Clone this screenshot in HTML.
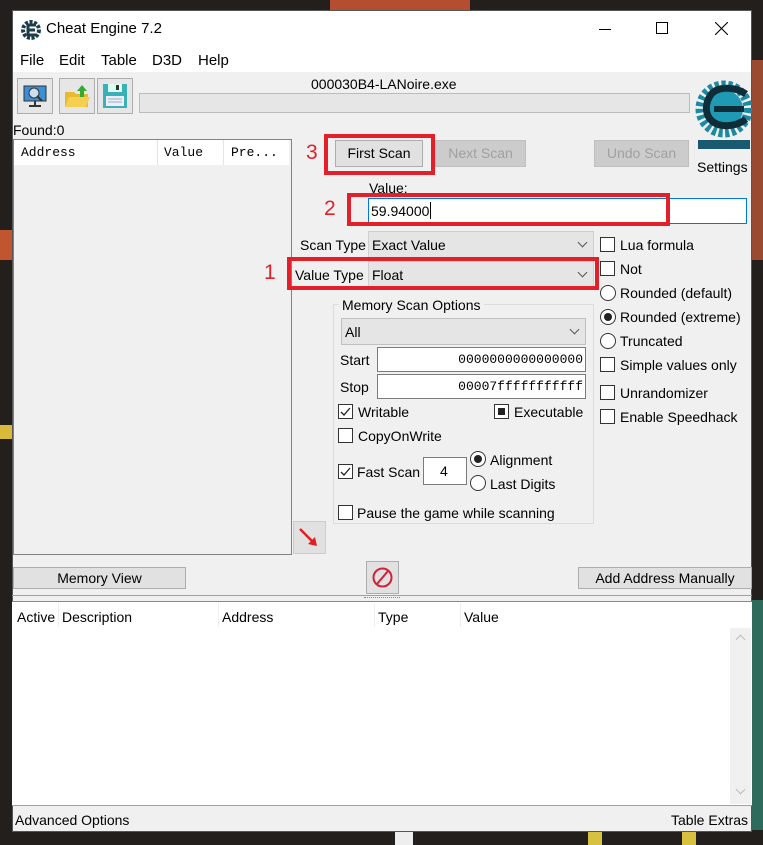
<!DOCTYPE html>
<html><head><meta charset="utf-8">
<style>
*{box-sizing:border-box;margin:0;padding:0}
body{width:763px;height:845px;overflow:hidden;background:#231f1c;font-family:"Liberation Sans",Arial,sans-serif;font-size:14px;color:#000;position:relative}
.a{position:absolute;white-space:nowrap}
.win{position:absolute;left:12px;top:10px;width:740px;height:822px;background:#f0f0f0}
.btn{position:absolute;background:#e1e1e1;border:1px solid #adadad;text-align:center}
.sel{position:absolute;background:#e5e5e5;border:1px solid #d0d0d0}
.inp{position:absolute;background:#fff;border:1px solid #7a7a7a}
.red{position:absolute;border:4px solid #e3202a}
.rn{position:absolute;color:#e3202a;font-size:21px}
.cb{position:absolute;width:15px;height:15px;border:1px solid #333;background:#fff}
.rd{position:absolute;width:16px;height:16px;border:1px solid #333;border-radius:50%;background:#fff}
.chev{position:absolute;width:7px;height:7px;border-right:1.3px solid #555;border-bottom:1.3px solid #555;transform:rotate(45deg)}
</style></head><body>
<div class="a" style="left:0;top:230px;width:12px;height:30px;background:#c0552f"></div>
<div class="a" style="left:0;top:425px;width:12px;height:14px;background:#d8b93a"></div>
<div class="a" style="left:752px;top:600px;width:11px;height:230px;background:#2f6b5c"></div>
<div class="a" style="left:330px;top:0;width:140px;height:10px;background:#b34e30"></div>
<div class="a" style="left:752px;top:60px;width:11px;height:200px;background:#9a4a30"></div>
<div class="a" style="left:395px;top:832px;width:18px;height:13px;background:#eee"></div>
<div class="a" style="left:588px;top:832px;width:14px;height:13px;background:#d8c040"></div>
<div class="a" style="left:682px;top:832px;width:14px;height:13px;background:#d8c040"></div>

<div class="win" style="border:1px solid #555"></div>
<div class="a" style="left:13px;top:11px;width:738px;height:61px;background:#fff"></div>
<svg class="a" style="left:21px;top:20px" width="20" height="20" viewBox="0 0 20 20"><circle cx="10" cy="10" r="8" fill="none" stroke="#1c3d4a" stroke-width="4" stroke-dasharray="3 1.5"/><path d="M15 5H7v10h8M7 10h7" stroke="#1c3d4a" stroke-width="3" fill="none"/></svg>
<div class="a" style="left:46px;top:20px;font-size:15px">Cheat Engine 7.2</div>
<div class="a" style="left:599px;top:29px;width:12px;height:1px;background:#000"></div>
<div class="a" style="left:656px;top:22px;width:12px;height:12px;border:1px solid #000"></div>
<svg class="a" style="left:715px;top:22px" width="13" height="13"><path d="M0 0L13 13M13 0L0 13" stroke="#000" stroke-width="1.1"/></svg>
<div class="a" style="left:20px;top:52px;font-size:15px">File</div>
<div class="a" style="left:59px;top:52px;font-size:15px">Edit</div>
<div class="a" style="left:101px;top:52px;font-size:15px">Table</div>
<div class="a" style="left:152px;top:52px;font-size:15px">D3D</div>
<div class="a" style="left:198px;top:52px;font-size:15px">Help</div>
<div class="btn" style="left:17px;top:78px;width:36px;height:36px;background:#e6e6e6"><svg width="30" height="30" viewBox="0 0 30 30" style="margin-top:2px"><rect x="4" y="5" width="22" height="15" fill="#3b8fd6" stroke="#333"/><circle cx="14" cy="12" r="5" fill="#cde" stroke="#333"/><path d="M17 15l5 5M15 20v4M9 25h12" stroke="#333" stroke-width="2"/></svg></div>
<div class="btn" style="left:59px;top:78px;width:36px;height:36px;background:#e6e6e6"><svg width="30" height="30" viewBox="0 0 30 30" style="margin-top:2px"><path d="M3 11h9l2 2h12v13H3z" fill="#e8b830"/><path d="M3 26l4-10h21l-4 10z" fill="#f5cf50"/><path d="M20 4l5 6h-3v6h-4v-6h-3z" fill="#3a3"/></svg></div>
<div class="btn" style="left:97px;top:78px;width:36px;height:36px;background:#e6e6e6"><svg width="30" height="30" viewBox="0 0 30 30" style="margin-top:2px"><rect x="3" y="3" width="24" height="24" fill="#3ab0b8"/><rect x="8" y="3" width="14" height="8" fill="#dfe"/><rect x="16" y="4" width="3" height="5" fill="#333"/><rect x="6" y="15" width="18" height="10" fill="#eef"/><path d="M8 18h14M8 21h14" stroke="#9ab"/></svg></div>
<div class="a" style="left:311px;top:76px;font-size:14px">000030B4-LANoire.exe</div>
<div class="a" style="left:139px;top:93px;width:551px;height:20px;background:#e6e6e6;border:1px solid #bcbcbc"></div>
<svg class="a" style="left:694px;top:72px" width="58" height="82" viewBox="0 0 58 82"><circle cx="30" cy="37" r="24" fill="none" stroke="#1a8aa3" stroke-width="9" stroke-dasharray="4 2.5"/><circle cx="30" cy="37" r="19" fill="#1f9ab5"/><path d="M52 22C40 14 22 14 16 24c-6 10-4 20 2 25 8 7 24 6 34-2" stroke="#0f2d38" stroke-width="7" fill="none"/><path d="M20 37h30" stroke="#0f2d38" stroke-width="6"/><rect x="4" y="68" width="52" height="9" fill="#1a5a70"/></svg>
<div class="a" style="left:697px;top:159px;font-size:14px">Settings</div>
<div class="a" style="left:13px;top:122px;font-size:14px">Found:0</div>
<div class="a" style="left:13px;top:139px;width:279px;height:416px;border:1px solid #828282;background:#f0f0f0"></div>
<div class="a" style="left:14px;top:140px;width:275px;height:25px;background:#fff"></div>
<div class="a" style="left:157px;top:140px;width:1px;height:25px;background:#e5e5e5"></div>
<div class="a" style="left:223px;top:140px;width:1px;height:25px;background:#e5e5e5"></div>
<div class="a" style="left:21px;top:145px;font-family:'Liberation Mono',monospace;font-size:13px">Address</div>
<div class="a" style="left:164px;top:145px;font-family:'Liberation Mono',monospace;font-size:13px">Value</div>
<div class="a" style="left:231px;top:145px;font-family:'Liberation Mono',monospace;font-size:13px">Pre...</div>
<div class="btn" style="left:335px;top:140px;width:88px;height:27px;line-height:25px">First Scan</div>
<div class="red" style="left:324px;top:134px;width:111px;height:41px"></div>
<div class="rn" style="left:306px;top:141px">3</div>
<div class="btn" style="left:435px;top:140px;width:91px;height:27px;line-height:25px;color:#a0a0a0;background:#ccc;border-color:#bfbfbf">Next Scan</div>
<div class="btn" style="left:594px;top:140px;width:95px;height:27px;line-height:25px;color:#a0a0a0;background:#ccc;border-color:#bfbfbf">Undo Scan</div>
<div class="a" style="left:369px;top:180px">Value:</div>
<div class="inp" style="left:368px;top:198px;width:379px;height:26px;border-color:#0078d7"></div>
<div class="a" style="left:371px;top:203px">59.94000</div>
<div class="a" style="left:430px;top:202px;width:1px;height:17px;background:#000"></div>
<div class="red" style="left:347px;top:193px;width:323px;height:33px"></div>
<div class="rn" style="left:324px;top:197px">2</div>
<div class="a" style="left:300px;top:237px">Scan Type</div>
<div class="sel" style="left:368px;top:231px;width:226px;height:27px"></div>
<div class="a" style="left:372px;top:237px">Exact Value</div>
<div class="chev" style="left:579px;top:239px"></div>
<div class="a" style="left:295px;top:267px">Value Type</div>
<div class="sel" style="left:368px;top:261px;width:226px;height:27px"></div>
<div class="a" style="left:372px;top:267px">Float</div>
<div class="chev" style="left:579px;top:269px"></div>
<div class="red" style="left:287px;top:257px;width:312px;height:33px"></div>
<div class="rn" style="left:264px;top:261px">1</div>
<div class="cb" style="left:600px;top:237px"></div><div class="a" style="left:620px;top:237px">Lua formula</div>
<div class="cb" style="left:600px;top:261px"></div><div class="a" style="left:620px;top:261px">Not</div>
<div class="rd" style="left:600px;top:285px"></div><div class="a" style="left:620px;top:285px">Rounded (default)</div>
<div class="rd" style="left:600px;top:309px"><div style="margin:3px;width:8px;height:8px;border-radius:50%;background:#222"></div></div><div class="a" style="left:620px;top:309px">Rounded (extreme)</div>
<div class="rd" style="left:600px;top:333px"></div><div class="a" style="left:620px;top:333px">Truncated</div>
<div class="cb" style="left:600px;top:357px"></div><div class="a" style="left:620px;top:357px">Simple values only</div>
<div class="cb" style="left:600px;top:385px"></div><div class="a" style="left:620px;top:385px">Unrandomizer</div>
<div class="cb" style="left:600px;top:409px"></div><div class="a" style="left:620px;top:409px">Enable Speedhack</div>
<div class="a" style="left:333px;top:304px;width:261px;height:220px;border:1px solid #dcdcdc"></div>
<div class="a" style="left:339px;top:297px;background:#f0f0f0;padding:0 3px">Memory Scan Options</div>
<div class="sel" style="left:341px;top:318px;width:245px;height:27px;border-color:#c0c0c0"></div>
<div class="a" style="left:345px;top:324px">All</div>
<div class="chev" style="left:571px;top:326px"></div>
<div class="a" style="left:340px;top:352px">Start</div>
<div class="inp" style="left:377px;top:347px;width:209px;height:25px"></div>
<div class="a" style="left:380px;top:352px;width:203px;text-align:right;font-family:'Liberation Mono',monospace;font-size:13px">0000000000000000</div>
<div class="a" style="left:340px;top:379px">Stop</div>
<div class="inp" style="left:377px;top:374px;width:209px;height:25px"></div>
<div class="a" style="left:380px;top:379px;width:203px;text-align:right;font-family:'Liberation Mono',monospace;font-size:13px">00007fffffffffff</div>
<div class="cb" style="left:338px;top:404px"><svg width="13" height="13"><path d="M2 7l3 3 6-7" stroke="#222" fill="none" stroke-width="1.3"/></svg></div><div class="a" style="left:358px;top:404px">Writable</div>
<div class="cb" style="left:494px;top:404px"><div style="margin:3px;width:7px;height:7px;background:#222"></div></div><div class="a" style="left:514px;top:404px">Executable</div>
<div class="cb" style="left:338px;top:428px"></div><div class="a" style="left:358px;top:428px">CopyOnWrite</div>
<div class="cb" style="left:338px;top:464px"><svg width="13" height="13"><path d="M2 7l3 3 6-7" stroke="#222" fill="none" stroke-width="1.3"/></svg></div><div class="a" style="left:357px;top:464px">Fast Scan</div>
<div class="inp" style="left:423px;top:457px;width:44px;height:28px"></div><div class="a" style="left:440px;top:463px">4</div>
<div class="rd" style="left:470px;top:451px"><div style="margin:3px;width:8px;height:8px;border-radius:50%;background:#222"></div></div><div class="a" style="left:490px;top:452px">Alignment</div>
<div class="rd" style="left:470px;top:475px"></div><div class="a" style="left:490px;top:476px">Last Digits</div>
<div class="cb" style="left:338px;top:505px"></div><div class="a" style="left:357px;top:505px">Pause the game while scanning</div>
<div class="btn" style="left:293px;top:521px;width:33px;height:33px;background:#e1e1e1;border-color:#ccc"><svg width="31" height="31"><path d="M6 7l14 14" stroke="#e02020" stroke-width="2.5"/><path d="M23 24l-9-2 7-7z" fill="#e02020"/></svg></div>
<div class="btn" style="left:13px;top:567px;width:173px;height:22px;line-height:20px">Memory View</div>
<div class="btn" style="left:366px;top:561px;width:33px;height:33px;background:#e1e1e1"><svg width="31" height="31"><circle cx="15.5" cy="15.5" r="9" fill="none" stroke="#d0203a" stroke-width="2"/><path d="M10 22L21 9" stroke="#d0203a" stroke-width="2"/></svg></div>
<div class="btn" style="left:578px;top:567px;width:174px;height:22px;line-height:20px">Add Address Manually</div>
<div class="a" style="left:12px;top:595px;width:740px;height:1px;background:#a0a0a0"></div>
<div class="a" style="left:364px;top:597px;width:36px;height:2px;border-top:1px dotted #888"></div>
<div class="a" style="left:12px;top:601px;width:740px;height:204px;background:#fff;border-top:1px solid #888"></div>
<div class="a" style="left:17px;top:609px">Active</div>
<div class="a" style="left:58px;top:603px;width:1px;height:24px;background:#eee"></div>
<div class="a" style="left:62px;top:609px">Description</div>
<div class="a" style="left:218px;top:603px;width:1px;height:24px;background:#eee"></div>
<div class="a" style="left:222px;top:609px">Address</div>
<div class="a" style="left:374px;top:603px;width:1px;height:24px;background:#eee"></div>
<div class="a" style="left:378px;top:609px">Type</div>
<div class="a" style="left:460px;top:603px;width:1px;height:24px;background:#eee"></div>
<div class="a" style="left:464px;top:609px">Value</div>
<div class="a" style="left:730px;top:628px;width:21px;height:176px;background:#f0f0f0"></div>
<div class="chev" style="left:737px;top:636px;transform:rotate(225deg);border-color:#bbb"></div>
<div class="chev" style="left:737px;top:786px;border-color:#bbb"></div>
<div class="a" style="left:12px;top:805px;width:740px;height:1px;background:#a0a0a0"></div>
<div class="a" style="left:15px;top:812px">Advanced Options</div>
<div class="a" style="left:671px;top:812px">Table Extras</div>
</body></html>
